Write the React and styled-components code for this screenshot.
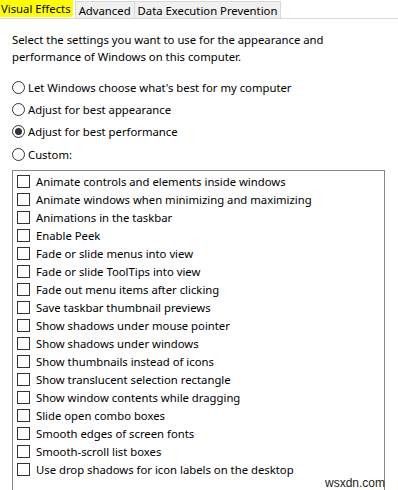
import React from "react";
import styled, { createGlobalStyle } from "styled-components";

const Global = createGlobalStyle`
  html, body { margin: 0; padding: 0; background: #ffffff; }
  body { font-family: "Noto Sans", "Open Sans", sans-serif; font-size: 11.3px; color: #000; }
`;

const Page = styled.div`
  width: 398px;
  height: 490px;
  overflow: hidden;
  position: relative;
  background: #fff;
`;

const TabStrip = styled.div`
  display: flex;
  align-items: flex-end;
  height: 18px;
  border-bottom: 1px solid #d9d9d9;
`;

const Tab = styled.div`
  display: flex;
  align-items: center;
  box-sizing: border-box;
  white-space: nowrap;
  padding: ${(p) => (p.$active ? "0 2px 0 1px" : "0 3px")};
  margin-left: ${(p) => (p.$active ? "0" : "-1px")};
  background: ${(p) => (p.$active ? "#ffff00" : "#f0f0f0")};
  border: ${(p) => (p.$active ? "none" : "1px solid #d9d9d9")};
  border-bottom: none;
  height: 17px;
  align-self: ${(p) => (p.$active ? "flex-start" : "flex-end")};
`;

const Spacer = styled.div`
  width: 3px;
`;

const Body = styled.div`
  padding: 12px 0 0 12px;
`;

const Intro = styled.p`
  margin: 0;
  line-height: 17px;
  width: 315px;
`;

const RadioGroup = styled.div`
  display: flex;
  flex-direction: column;
  margin-top: 11px;
`;

const RadioRow = styled.label`
  display: flex;
  align-items: center;
  height: 22.3px;
  gap: 3px;
`;

const RadioCircle = styled.span`
  width: 13px;
  height: 13px;
  box-sizing: border-box;
  border: 1px solid #333;
  border-radius: 50%;
  display: flex;
  align-items: center;
  justify-content: center;
  &::after {
    content: "";
    width: 7px;
    height: 7px;
    border-radius: 50%;
    background: ${(p) => (p.$checked ? "#333" : "transparent")};
  }
`;

const ListBox = styled.div`
  margin-top: 5px;
  width: 373px;
  height: 340px;
  box-sizing: border-box;
  border: 1px solid #828790;
  border-bottom: none;
  padding: 1px 0 0 4px;
`;

const CheckRow = styled.div`
  display: flex;
  align-items: center;
  height: 18px;
  gap: 6px;
`;

const CheckBox = styled.span`
  width: 13px;
  height: 13px;
  box-sizing: border-box;
  border: 1px solid #333;
  background: #fff;
  flex: none;
`;

const Watermark = styled.div`
  position: absolute;
  right: 13px;
  bottom: 0px;
  color: #222;
  font-family: "Liberation Sans", Arial, sans-serif;
  font-size: 12px;
`;

const items = [
  "Animate controls and elements inside windows",
  "Animate windows when minimizing and maximizing",
  "Animations in the taskbar",
  "Enable Peek",
  "Fade or slide menus into view",
  "Fade or slide ToolTips into view",
  "Fade out menu items after clicking",
  "Save taskbar thumbnail previews",
  "Show shadows under mouse pointer",
  "Show shadows under windows",
  "Show thumbnails instead of icons",
  "Show translucent selection rectangle",
  "Show window contents while dragging",
  "Slide open combo boxes",
  "Smooth edges of screen fonts",
  "Smooth-scroll list boxes",
  "Use drop shadows for icon labels on the desktop",
];

const radios = [
  ["Let Windows choose what's best for my computer", false],
  ["Adjust for best appearance", false],
  ["Adjust for best performance", true],
  ["Custom:", false],
];

export default function App() {
  return (
    <Page>
      <Global />
      <TabStrip>
        <Tab $active>Visual Effects</Tab>
        <Spacer />
        <Tab>Advanced</Tab>
        <Tab>Data Execution Prevention</Tab>
      </TabStrip>
      <Body>
        <Intro>
          Select the settings you want to use for the appearance and performance of Windows on this computer.
        </Intro>
        <RadioGroup>
          {radios.map(([t, c]) => (
            <RadioRow key={t}>
              <RadioCircle $checked={c} />
              {t}
            </RadioRow>
          ))}
        </RadioGroup>
        <ListBox>
          {items.map((t) => (
            <CheckRow key={t}>
              <CheckBox />
              {t}
            </CheckRow>
          ))}
        </ListBox>
      </Body>
      <Watermark>wsxdn.com</Watermark>
    </Page>
  );
}
